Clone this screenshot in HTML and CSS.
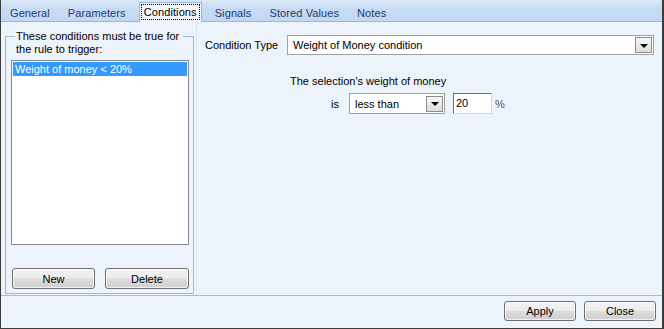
FILE: index.html
```html
<!DOCTYPE html>
<html lang="en">
<head>
    <meta charset="UTF-8">
    <title>Rule Conditions</title>
    <link rel="stylesheet" href="styles.css">
</head>
<body>
    <div class="window">
        <div class="tabs">
            <span class="tab">General</span>
            <span class="tab">Parameters</span>
            <span class="tab active"><span class="focus">Conditions</span></span>
            <span class="tab">Signals</span>
            <span class="tab">Stored Values</span>
            <span class="tab">Notes</span>
        </div>

        <div class="page">
            <div class="left">
                <div class="group">
                    <div class="legend">These conditions must be true for the rule to trigger:</div>
                    <div class="list">
                        <div class="item selected">Weight of money &lt; 20%</div>
                    </div>
                    <div class="group-buttons">
                        <button class="btn btn-new">New</button>
                        <button class="btn btn-delete">Delete</button>
                    </div>
                </div>
            </div>

            <div class="right">
                <div class="type-row">
                    <span class="type-label">Condition Type</span>
                    <div class="combo combo-wide">
                        <span class="combo-text">Weight of Money condition</span>
                        <span class="drop"></span>
                    </div>
                </div>

                <div class="weight">
                    <div class="weight-title">The selection's weight of money</div>
                    <div class="weight-row">
                        <span class="is-label">is</span>
                        <div class="combo combo-small">
                            <span class="combo-text">less than</span>
                            <span class="drop"></span>
                        </div>
                        <div class="textbox">20</div>
                        <span class="unit">%</span>
                    </div>
                </div>
            </div>
        </div>

        <div class="footer">
            <button class="btn btn-footer">Apply</button>
            <button class="btn btn-footer">Close</button>
        </div>
    </div>
</body>
</html>
```

FILE: styles.css
```css
* {
    margin: 0;
    padding: 0;
    box-sizing: border-box;
}

body {
    font-family: 'Liberation Sans', Arial, sans-serif;
    font-size: 11px;
    color: #000;
    background: #fff;
}

.window {
    width: 664px;
    height: 329px;
    background: #edf3fb;
    border-left: 1px solid #3c3c3c;
    border-right: 2px solid #3c3c3c;
    border-bottom: 1px solid #3c3c3c;
    display: flex;
    flex-direction: column;
}

/* tab strip */
.tabs {
    height: 22px;
    flex-shrink: 0;
    display: flex;
    align-items: flex-end;
    background: linear-gradient(#dce8f8 0%, #c8dbf5 40%, #c2d7f3 100%);
    border-bottom: 1px solid #98b7e0;
}

.tab {
    line-height: 16px;
    padding: 0 9px;
    color: #1f3b66;
    white-space: nowrap;
    letter-spacing: 0.1px;
}

.tab.active {
    margin: 0 4px -1px 4px;
    padding: 1px 1px 2px 1px;
    background: #f3f7fd;
    border: 1px solid #98b7e0;
    border-bottom: none;
    color: #000;
}

.focus {
    display: block;
    line-height: 14px;
    padding: 0 2px;
    border: 1px dotted #000;
}

/* main page */
.page {
    height: 274px;
    flex-shrink: 0;
    display: flex;
    border-bottom: 1px solid #a3bad8;
}

.left {
    width: 195px;
    padding-left: 4px;
    flex-shrink: 0;
}

.group {
    width: 189px;
    height: 258px;
    margin-top: 14px;
    border: 1px solid #9bb8de;
    display: flex;
    flex-direction: column;
    padding-bottom: 4px;
}

.legend {
    margin: -7px 10px 0 9px;
    padding: 0 1px;
    line-height: 13px;
    background: #edf3fb;
}

.list {
    margin: 4px 4px 0 5px;
    height: 185px;
    background: #fff;
    border: 1px solid #828790;
    padding: 1px;
}

.item {
    line-height: 14px;
    padding-left: 2px;
}

.item.selected {
    background: #3399ff;
    color: #fff;
}

.group-buttons {
    margin-top: auto;
    display: flex;
    padding-left: 6px;
    gap: 10px;
}

.btn {
    font-family: 'Liberation Sans', Arial, sans-serif;
    font-size: 11px;
    color: #000;
    height: 21px;
    border: 1px solid #707070;
    border-radius: 3px;
    background: linear-gradient(#f4f4f4 0%, #ebebeb 48%, #dddddd 52%, #cfcfcf 100%);
    box-shadow: inset 0 0 0 1px rgba(255, 255, 255, 0.7);
}

.btn-new {
    width: 83px;
}

.btn-delete {
    width: 84px;
}

.right {
    flex: 1;
    border-left: 1px solid #dbe5f3;
    padding: 13px 8px 0 8px;
}

.type-row {
    display: flex;
    align-items: center;
}

.type-label {
    width: 82px;
    flex-shrink: 0;
}

.combo {
    height: 20px;
    background: #fff;
    border: 1px solid #a0a0a0;
    display: flex;
    align-items: center;
    padding: 1px;
}

.combo-wide {
    flex: 1;
}

.combo-small {
    width: 96px;
    height: 21px;
}

.combo-text {
    flex: 1;
    padding-left: 4px;
    white-space: nowrap;
}

.drop {
    width: 17px;
    height: 16px;
    border: 1px solid #8c8c8c;
    background: linear-gradient(#f7f7f7, #dcdcdc);
    display: flex;
    align-items: center;
    justify-content: center;
}

.drop::after {
    content: "";
    border-top: 4px solid #000;
    border-left: 4px solid transparent;
    border-right: 4px solid transparent;
    margin-top: 1px;
}

.weight {
    margin: 20px 0 0 85px;
}

.weight-title {
    line-height: 13px;
}

.weight-row {
    margin-top: 5px;
    display: flex;
    align-items: center;
    padding-left: 41px;
}

.is-label {
    width: 18px;
}

.textbox {
    width: 39px;
    height: 21px;
    margin-left: 8px;
    background: #fff;
    border: 1px solid;
    border-color: #6f6f6f #d8d8d8 #d8d8d8 #6f6f6f;
    padding: 3px 0 0 2px;
}

.unit {
    margin-left: 3px;
    color: #555;
}

/* bottom buttons */
.footer {
    flex: 1;
    display: flex;
    justify-content: flex-end;
    gap: 8px;
    padding: 5px 6px 0 0;
}

.btn-footer {
    width: 72px;
    height: 20px;
}
```
